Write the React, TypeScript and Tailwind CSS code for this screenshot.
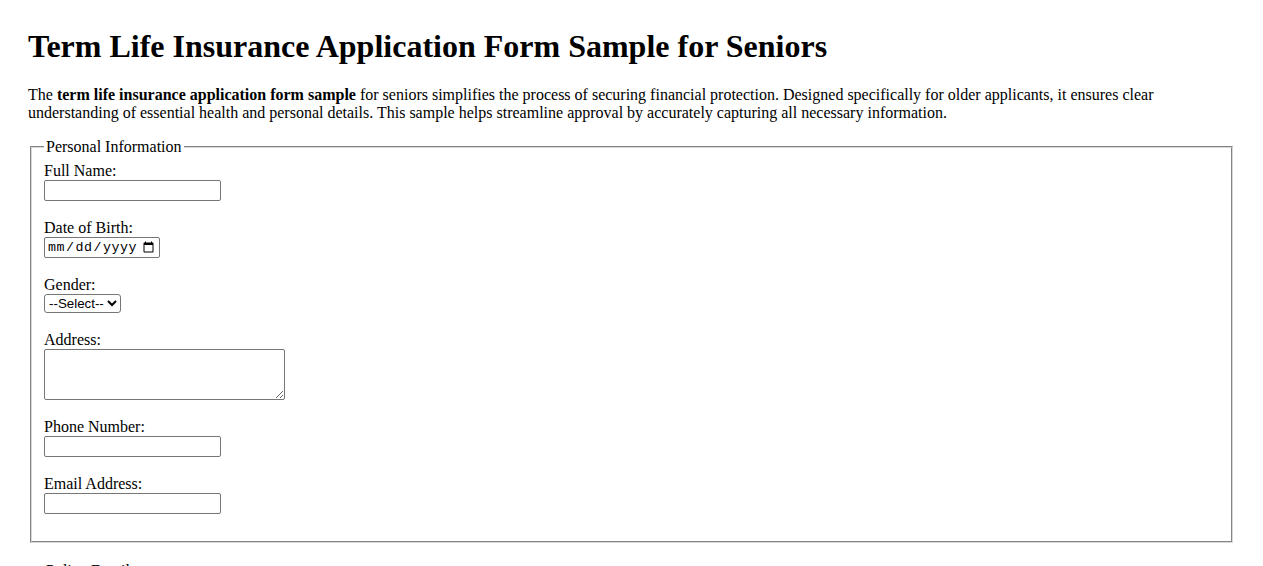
import React from "react"

const inputCls =
  "block h-[21px] w-[177px] rounded-[2px] border border-[#767676] bg-white px-[2px] py-px font-['Liberation_Sans',Arial,sans-serif] text-[13.333px] leading-[normal]"

function Field({ label, htmlFor, children }: { label: string; htmlFor: string; children: React.ReactNode }) {
  return (
    <div className="mb-[18px]">
      <label htmlFor={htmlFor} className="block h-[18px] leading-[18px]">
        {label}
      </label>
      {children}
    </div>
  )
}

export default function App() {
  return (
    <div className="h-screen overflow-hidden bg-white font-['Liberation_Serif','Times_New_Roman',serif] text-base text-black">
      <div className="px-[28px] pt-[28px]">
        <h1 className="mb-[21.44px] text-[32px] font-bold leading-[normal]">
          Term Life Insurance Application Form Sample for Seniors
        </h1>
        <p className="mb-4 leading-[normal]">
          The <strong className="font-bold">term life insurance application form sample</strong> for seniors simplifies
          the process of securing financial protection. Designed specifically for older applicants, it ensures clear
          understanding of essential health and personal details. This sample helps streamline approval by accurately
          capturing all necessary information.
        </p>
        <form>
          <fieldset className="mx-[2px] border-2 border-[#d8d8d8] px-3 pt-[5.6px] pb-[9px] [border-style:groove]">
            <legend className="px-[2px] leading-[normal]">Personal Information</legend>
            <Field label="Full Name:" htmlFor="fullName">
              <input id="fullName" type="text" className={inputCls} />
            </Field>
            <Field label="Date of Birth:" htmlFor="dob">
              <input
                id="dob"
                type="date"
                className="block h-[21px] w-[116px] rounded-[2px] border border-[#767676] bg-white px-[2px] py-px font-['Liberation_Mono',monospace] text-[13.333px] leading-[normal] tracking-[0.5px]"
              />
            </Field>
            <Field label="Gender:" htmlFor="gender">
              <select
                id="gender"
                defaultValue=""
                className="block h-[19px] w-[77px] rounded-[3px] border border-[#767676] bg-white font-['Liberation_Sans',Arial,sans-serif] text-[13.333px] leading-[normal]"
              >
                <option value="">--Select--</option>
                <option value="male">Male</option>
                <option value="female">Female</option>
                <option value="other">Other</option>
              </select>
            </Field>
            <Field label="Address:" htmlFor="address">
              <textarea
                id="address"
                className="block h-[51px] w-[241px] rounded-[2px] border border-[#767676] bg-white px-[2px] py-px font-['Liberation_Mono',monospace] text-[13.333px]"
              />
            </Field>
            <Field label="Phone Number:" htmlFor="phone">
              <input id="phone" type="tel" className={inputCls} />
            </Field>
            <Field label="Email Address:" htmlFor="email">
              <input id="email" type="email" className={inputCls} />
            </Field>
          </fieldset>
          <fieldset className="mx-[2px] mt-[19px] border-2 border-[#d8d8d8] px-3 pt-[5.6px] pb-[9px] [border-style:groove]">
            <legend className="px-[2px] leading-[normal]">Policy Details</legend>
            <Field label="Coverage Amount:" htmlFor="coverage">
              <input id="coverage" type="number" className={inputCls} />
            </Field>
          </fieldset>
        </form>
      </div>
    </div>
  )
}
